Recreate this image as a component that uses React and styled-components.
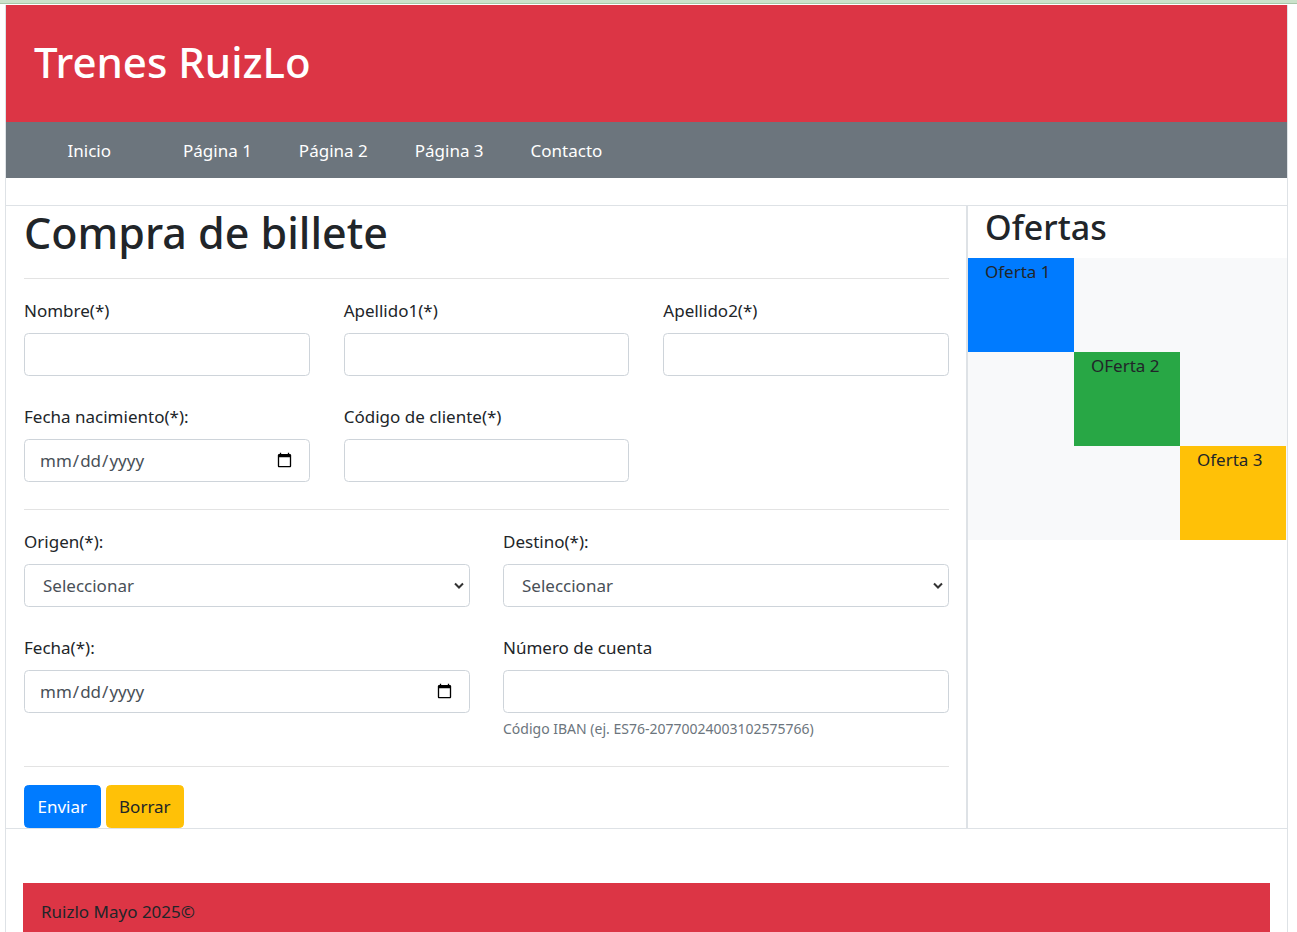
import styled, { createGlobalStyle } from "styled-components"

const GlobalStyle = createGlobalStyle`
  html, body {
    margin: 0;
    overflow: hidden;
  }
  body {
    font-family: "Noto Sans", "Open Sans", sans-serif;
    font-size: 17px;
    color: #212529;
    background: #fff;
  }
  * {
    box-sizing: border-box;
  }
`

const TopStrip = styled.div`
  height: 4px;
  background: #cbe2cb;
  border-bottom: 1px solid #a9c7a9;
`

const Page = styled.div`
  margin: 1px 0 0 5px;
  width: 1283px;
  height: 928px;
  border-left: 1px solid #dee2e6;
  border-right: 1px solid #dee2e6;
`

const Header = styled.header`
  height: 117px;
  background: #dc3545;
  display: flex;
  align-items: center;
  padding-left: 28px;
`

const Title = styled.h1`
  margin: 0 0 4px;
  color: #fff;
  font-size: 42px;
  font-weight: 500;
`

const Nav = styled.nav`
  height: 56px;
  background: #6c757d;
  display: flex;
  align-items: center;
  padding-left: 38px;
`

const NavLink = styled.a`
  color: #fff;
  text-decoration: none;
  padding: 0 23.5px;
  margin-right: ${props => props.$wide ? '25px' : '0'};
  line-height: 27px;
`

const Row = styled.div`
  margin-top: 27px;
  display: flex;
  border-top: 1px solid #dee2e6;
  border-bottom: 1px solid #dee2e6;
`

const Main = styled.main`
  width: 962px;
  padding: 0 17px 0 18px;
  border-right: 2px solid #dee2e6;
`

const Heading = styled.h1`
  margin: 0;
  font-size: 43px;
  line-height: 54px;
  font-weight: 500;
`

const Rule = styled.hr`
  border: 0;
  border-top: 1px solid #e3e3e3;
  margin: ${props => props.$top || 0}px 0 18px;
`

const Grid = styled.div`
  display: grid;
  grid-template-columns: ${props => props.$cols === 2 ? '1fr 1fr' : '1fr 1fr 1fr'};
  column-gap: ${props => props.$cols === 2 ? '33px' : '34px'};
  align-items: start;
`

const Group = styled.div`
  margin-bottom: 27px;
`

const Label = styled.label`
  display: block;
  line-height: 27px;
  margin-bottom: 9px;
`

const Input = styled.input`
  display: block;
  width: 100%;
  height: 43px;
  padding: 0 14px;
  font: inherit;
  color: #495057;
  border: 1px solid #ced4da;
  border-radius: 4.5px;
  background: #fff;
`

const SelectWrap = styled.div`
  position: relative;
`

const Select = styled.select`
  display: block;
  width: 100%;
  height: 43px;
  padding: 0 14px 0 18px;
  font: inherit;
  color: #495057;
  border: 1px solid #ced4da;
  border-radius: 4.5px;
  background: #fff;
  appearance: none;
`

const Chevron = styled.svg`
  position: absolute;
  right: 5px;
  top: 17px;
  width: 12px;
  height: 9px;
  pointer-events: none;
`

const Help = styled.small`
  display: block;
  margin-top: 5px;
  font-size: 14px;
  line-height: 21px;
  color: #6c757d;
`

const Buttons = styled.div`
  display: flex;
  gap: 5px;
`

const Button = styled.button`
  height: 43px;
  padding: 0 12.5px;
  font: inherit;
  border: 1px solid ${props => props.$bg};
  border-radius: 4.5px;
  background: ${props => props.$bg};
  color: ${props => props.$color};
`

const Aside = styled.aside`
  flex: 1;
`

const AsideTitle = styled.h2`
  margin: 0 0 9px;
  padding-left: 17px;
  font-size: 34px;
  line-height: 43px;
  font-weight: 500;
`

const OfferGrid = styled.div`
  display: grid;
  grid-template-columns: repeat(3, 106px);
  grid-auto-rows: 94px;
  background: #f8f9fa;
`

const Offer = styled.div`
  grid-column: ${props => props.$pos};
  grid-row: ${props => props.$pos};
  background: ${props => props.$bg};
  padding-left: 17px;
  line-height: 27px;
`

const Footer = styled.footer`
  margin: 54px 17px 0;
  height: 60px;
  background: #dc3545;
  padding: 15px 18px;
  line-height: 27px;
`

function DateField ({ label }) {
  return (
    <Group>
      <Label>{label}</Label>
      <Input type="date" />
    </Group>
  )
}

function SelectField ({ label }) {
  return (
    <Group>
      <Label>{label}</Label>
      <SelectWrap>
        <Select defaultValue="">
          <option value="">Seleccionar</option>
        </Select>
        <Chevron viewBox="0 0 12 9">
          <path d="M2 2.5l4 4 4-4" fill="none" stroke="#333" strokeWidth="2" />
        </Chevron>
      </SelectWrap>
    </Group>
  )
}

function TextField ({ label, help }) {
  return (
    <Group>
      <Label>{label}</Label>
      <Input type="text" />
      {help && <Help>{help}</Help>}
    </Group>
  )
}

export default function App () {
  return (
    <>
      <GlobalStyle />
      <TopStrip />
      <Page>
        <Header>
          <Title>Trenes RuizLo</Title>
        </Header>
        <Nav>
          <NavLink href="#" $wide>Inicio</NavLink>
          <NavLink href="#">Página 1</NavLink>
          <NavLink href="#">Página 2</NavLink>
          <NavLink href="#">Página 3</NavLink>
          <NavLink href="#">Contacto</NavLink>
        </Nav>
        <Row>
          <Main>
            <Heading>Compra de billete</Heading>
            <Rule $top={18} />
            <Grid>
              <TextField label="Nombre(*)" />
              <TextField label="Apellido1(*)" />
              <TextField label="Apellido2(*)" />
              <DateField label="Fecha nacimiento(*):" />
              <TextField label="Código de cliente(*)" />
            </Grid>
            <Rule />
            <Grid $cols={2}>
              <SelectField label="Origen(*):" />
              <SelectField label="Destino(*):" />
              <DateField label="Fecha(*):" />
              <TextField label="Número de cuenta" help="Código IBAN (ej. ES76-20770024003102575766)" />
            </Grid>
            <Rule />
            <Buttons>
              <Button $bg="#007bff" $color="#fff">Enviar</Button>
              <Button $bg="#ffc107" $color="#212529">Borrar</Button>
            </Buttons>
          </Main>
          <Aside>
            <AsideTitle>Ofertas</AsideTitle>
            <OfferGrid>
              <Offer $pos={1} $bg="#007bff">Oferta 1</Offer>
              <Offer $pos={2} $bg="#28a745">OFerta 2</Offer>
              <Offer $pos={3} $bg="#ffc107">Oferta 3</Offer>
            </OfferGrid>
          </Aside>
        </Row>
        <Footer>Ruizlo Mayo 2025©</Footer>
      </Page>
    </>
  )
}
